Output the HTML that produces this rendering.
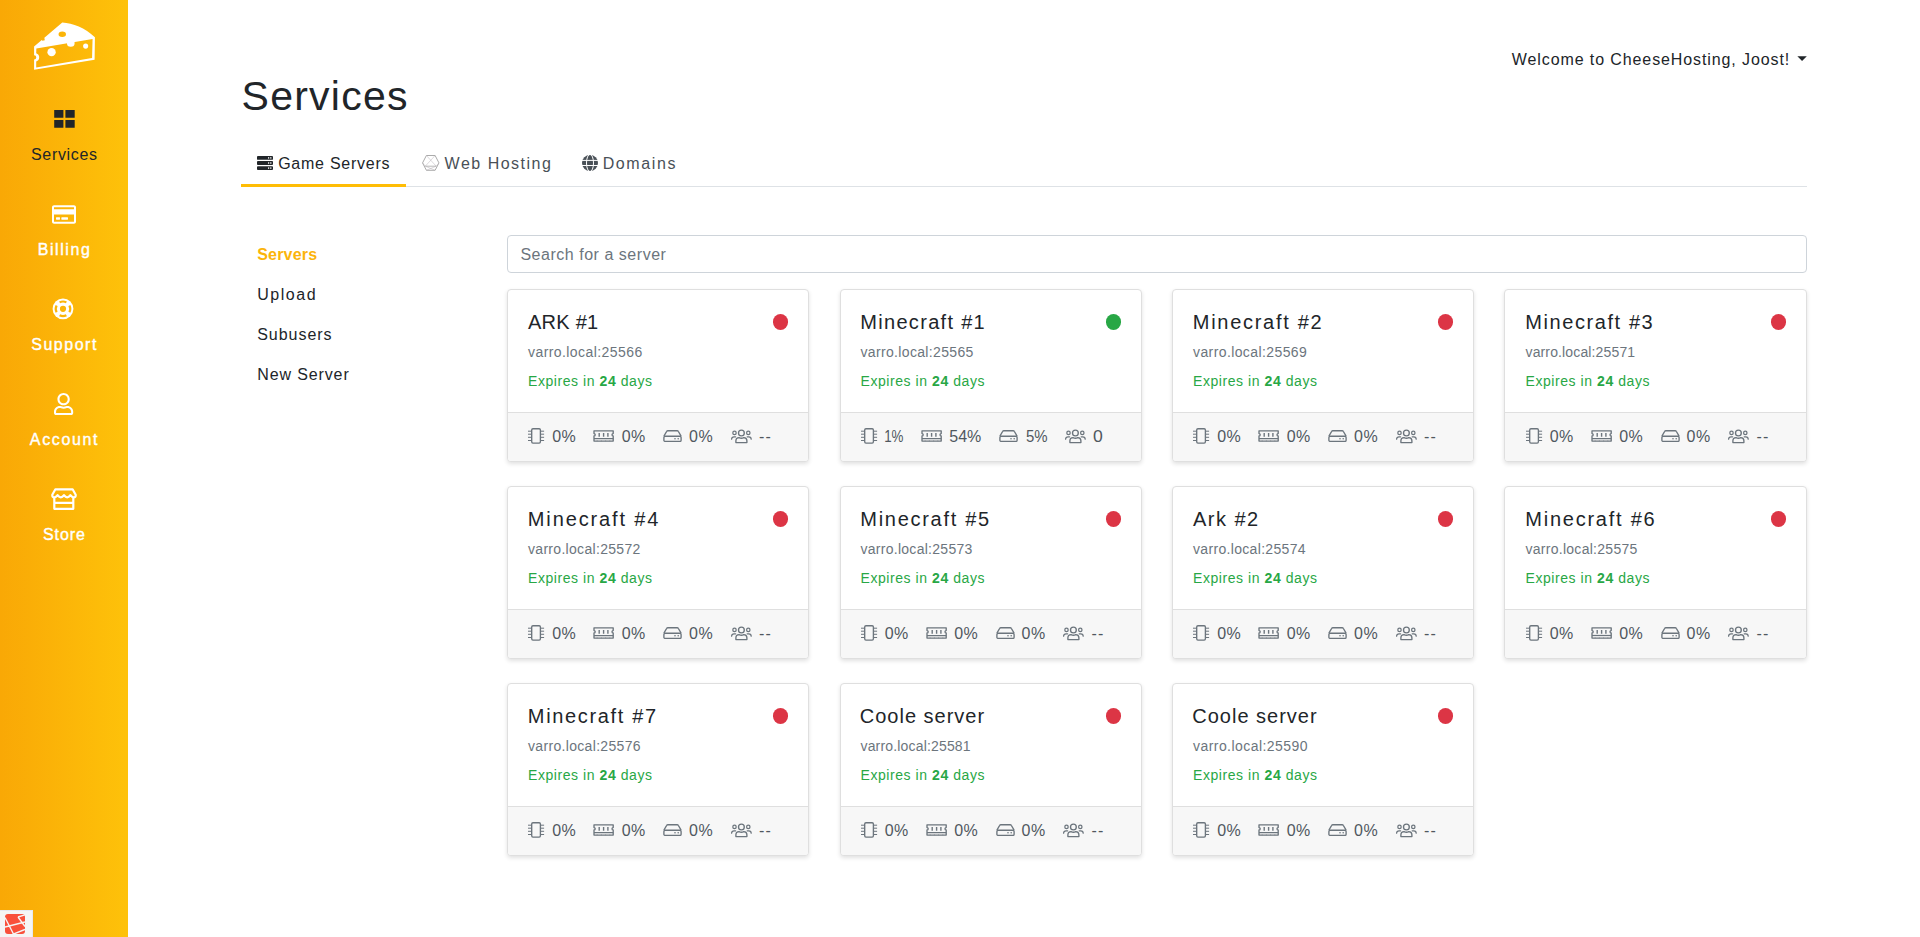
<!DOCTYPE html>
<html lang="en"><head><meta charset="utf-8"><title>Services - CheeseHosting</title>
<style>
*{box-sizing:border-box}
html,body{margin:0;padding:0}
body{width:1920px;height:937px;overflow:hidden;background:#fff;font-family:"Liberation Sans",sans-serif;font-size:16px;color:#212529;position:relative}
.t{position:absolute;display:block;white-space:pre;margin:0;padding:0;font-weight:400;text-decoration:none}
.sidebar{position:absolute;left:0;top:0;width:128px;height:937px;background:linear-gradient(90deg,#f9a806 0%,#fec20a 100%)}
.logo{position:absolute}
.sitem{position:absolute;left:0;width:128px}
.sitem svg{display:block}
.dbg{position:absolute;left:0;top:910px;width:33px;height:27px;background:#f5f5f5;box-shadow:inset -1px 1px 0 #e6e8f2}
.dbg svg{position:absolute;left:5px;top:4px}
.caret{position:absolute;left:1797.4px;top:56.2px;width:9.4px;height:4.8px;background:#212529;clip-path:polygon(0 0,100% 0,50% 100%)}
.tabs{position:absolute;left:241px;top:141px;width:1566px;height:46px;border-bottom:1px solid #dee2e6}
.tab{position:absolute;top:0;height:46px}
.tab svg{position:absolute;top:14px}
.tab.active{border-bottom:3px solid #ffbd05}
.search{position:absolute;left:507px;top:235px;width:1300px;height:38px;border:1px solid #ced4da;border-radius:4px}
.card{position:absolute;height:173px;background:#fff;border:1px solid #dfdfdf;border-radius:4px;box-shadow:0 2px 4px rgba(0,0,0,.12);overflow:hidden}
.card svg{position:absolute}
.exp{position:absolute;top:81px;margin:0;font-size:14px;line-height:20px;color:#28a745;white-space:nowrap;letter-spacing:.56px}
.dot{position:absolute;right:19.9px;top:24.2px;width:15.4px;height:15.4px;border-radius:50%}
.dot.r{background:#dc3545}.dot.g{background:#28a745}
.cfoot{position:absolute;left:0;right:0;top:122px;height:49px;background:#f7f7f7;border-top:1px solid #dfdfdf}
.i-chip{width:17px;height:16px}
.i-mem{width:21px;height:12px}
.i-hdd{width:19px;height:12px}
.i-users{width:21px;height:15px}
.wl{-webkit-text-stroke:.4px #fff}

</style></head>
<body>

<div class="sidebar">
<svg class="logo" style="left:28px;top:16px;width:72px;height:60px" viewBox="0 0 1124 937">
<path fill="#fff" fill-rule="evenodd" d="M535,100C700,108 890,185 1045,330L1040,685L95,840L95,680A34,34 0 0 0 95,612L95,478L215,375L225,386L262,378L255,338L265,330Z M130,508L1008,358L1000,655L128,803L128,712A70,70 0 0 0 128,580Z M477,285a58,42 0 1 0 116,0a58,42 0 1 0 -116,0Z"/>
<circle cx="368" cy="565" r="65" fill="#fff"/><circle cx="900" cy="470" r="40" fill="#fff"/><circle cx="668" cy="422" r="60" fill="#fff"/>
</svg>
<div class="sitem active" style="top:110px"><svg width="21" height="18" viewBox="0 0 21 18" style="margin-left:53.6px"><path fill="#212529" d="M.2 1h9.2v7.8H.2zM11.4 1h9.3v7.8h-9.3zM.2 11h9.2v7.8H.2zM11.4 11h9.3v7.8h-9.3z" transform="translate(0,-1)"/></svg></div>
<div class="sitem" style="top:204.900px"><svg width="24" height="19" viewBox="0 32 576 448" style="margin-left:51.500px"><path fill="#fff" d="M527.9 32H48.1C21.5 32 0 53.500 0 80v352c0 26.500 21.500 48 48.100 48h479.800c26.600 0 48.100-21.500 48.100-48V80c0-26.500-21.500-48-48.100-48zM54.100 80h467.800c3.300 0 6 2.700 6 6v42H48.100V86c0-3.300 2.700-6 6-6zm467.800 352H54.100c-3.300 0-6-2.700-6-6V256h479.800v170c0 3.300-2.700 6-6 6zM192 332v40c0 6.600-5.400 12-12 12h-72c-6.600 0-12-5.400-12-12v-40c0-6.600 5.400-12 12-12h72c6.600 0 12 5.400 12 12zm192 0v40c0 6.600-5.400 12-12 12H236c-6.600 0-12-5.400-12-12v-40c0-6.600 5.400-12 12-12h136c6.600 0 12 5.400 12 12z"/></svg></div>
<div class="sitem" style="top:297.900px"><svg width="22" height="22" viewBox="0 0 22 22" style="margin-left:52.100px"><circle cx="11" cy="10.8" r="10.4" fill="#fff"/><circle cx="11" cy="10.800" r="3.100" fill="#fbb509"/><g fill="none" stroke="#fbb509" stroke-width="2.2"><path d="M7.6 4.4A7.3 7.3 0 0 1 14.400 4.400"/><path d="M7.6 17.200A7.300 7.300 0 0 0 14.400 17.200"/><path d="M4.600 7.400A7.300 7.300 0 0 0 4.600 14.200"/><path d="M17.400 7.400A7.300 7.300 0 0 1 17.400 14.200"/></g></svg></div>
<div class="sitem" style="top:393px"><svg width="19.2" height="22" viewBox="0 0 448 512" style="margin-left:54.400px"><path fill="#fff" d="M313.600 304c-28.700 0-42.500 16-89.600 16-47.100 0-60.800-16-89.600-16C60.200 304 0 364.200 0 438.400V464c0 26.500 21.500 48 48 48h352c26.500 0 48-21.500 48-48v-25.600c0-74.200-60.200-134.400-134.400-134.400zM400 464H48v-25.600c0-47.600 38.800-86.400 86.400-86.400 14.600 0 38.300 16 89.600 16 51.700 0 74.900-16 89.600-16 47.600 0 86.400 38.800 86.400 86.400V464zM224 288c79.500 0 144-64.500 144-144S303.500 0 224 0 80 64.500 80 144s64.500 144 144 144zm0-240c52.900 0 96 43.100 96 96s-43.100 96-96 96-96-43.100-96-96 43.100-96 96-96z"/></svg></div>
<div class="sitem" style="top:488px"><svg width="26" height="22" viewBox="0 0 26 22" style="margin-left:51px"><g fill="none" stroke="#fff" stroke-width="2.200" stroke-linejoin="round" stroke-linecap="round"><path d="M4.400 1.300H21.600L24.700 6.800Q25 9.400 22.600 9.400Q21 9.400 19.400 7.200Q17.800 9.400 16.200 9.400Q14.600 9.400 13 7.200Q11.400 9.400 9.800 9.400Q8.200 9.400 6.600 7.200Q5 9.400 3.400 9.400Q1 9.400 1.300 6.800Z"/><path d="M3.300 10.400V20.800H22.300V10.400M3.300 14.900H22.300"/></g></svg></div>
<a class="t" style="left:31.00px;top:142.96px;font-size:16px;line-height:24px;letter-spacing:0.678px;color:#212529">Services</a><a class="t wl" style="left:37.75px;top:237.96px;font-size:16px;line-height:24px;letter-spacing:1.560px;color:#fff">Billing</a><a class="t wl" style="left:31.25px;top:332.96px;font-size:16px;line-height:24px;letter-spacing:1.509px;color:#fff">Support</a><a class="t wl" style="left:29.85px;top:427.96px;font-size:16px;line-height:24px;letter-spacing:1.640px;color:#fff">Account</a><a class="t wl" style="left:42.97px;top:522.96px;font-size:16px;line-height:24px;letter-spacing:0.897px;color:#fff">Store</a>
<div class="dbg"><svg width="20" height="20" viewBox="0 0 20 20"><rect width="20" height="20" rx="3" fill="#f9503b"/><g stroke="#f5f5f5" stroke-width="1.350" fill="none"><path d="M0 3.500L8.500 20M0 13L20 8M13 3L20 .8M13 3L20 12.500M7.500 20.500L20 15.500"/></g></svg></div>
</div>
<a class="t" style="left:1511.80px;top:48.26px;font-size:16px;line-height:24px;letter-spacing:0.898px;color:#212529">Welcome to CheeseHosting, Joost!</a><i class="caret"></i>
<h1 class="t" style="left:241.60px;top:65.39px;font-size:41px;line-height:62px;letter-spacing:1.241px;color:#212529">Services</h1>
<div class="tabs">
<div class="tab active" style="left:0;width:165px"><svg width="16" height="16" viewBox="0 0 16 16" style="left:16px"><g fill="#212529"><rect x="0" y="1" width="16" height="3.800" rx=".9"/><rect x="0" y="6.100" width="16" height="3.800" rx=".9"/><rect x="0" y="11.200" width="16" height="3.800" rx=".9"/></g><g fill="#fff"><rect x="11" y="2.200" width="1.200" height="1.400"/><rect x="13.200" y="2.200" width="1.200" height="1.400"/><rect x="11" y="7.300" width="1.200" height="1.400"/><rect x="13.200" y="7.300" width="1.200" height="1.400"/><rect x="11" y="12.400" width="1.200" height="1.400"/><rect x="13.200" y="12.400" width="1.200" height="1.400"/></g></svg></div>
<div class="tab" style="left:165px;width:160px"><svg width="18" height="16" viewBox="0 0 18 16" style="left:16px;top:14px"><g fill="none" stroke="#a2a2a2"><path stroke-width=".9" d="M.55 7.900 4.400 .5H13.100L16.950 7.900 13.100 15.300H4.400Z"/><path stroke-width=".75" d="M3.300 11.200H14.200"/><path stroke-width=".5" stroke="#b8b2b8" d="M4.400 .5 14.200 11.200M13.100 .5 3.300 11.200M3.300 11.200 13.100 15.300M14.200 11.200 4.400 15.300M.55 7.900 3.300 11.200M16.950 7.900 14.200 11.200"/></g></svg></div>
<div class="tab" style="left:325px;width:130px"><svg width="16" height="16" viewBox="0 0 16 16" style="left:16.100px"><circle cx="8" cy="8" r="8" fill="#495057"/><g fill="none" stroke="#fff" stroke-width="1"><path d="M0 5.400H16M0 10.500H16"/><ellipse cx="8" cy="8" rx="3.500" ry="8.600"/></g></svg></div>
</div>
<a class="t" style="left:278.20px;top:152.26px;font-size:16px;line-height:24px;letter-spacing:0.742px;color:#212529">Game Servers</a><a class="t" style="left:444.60px;top:152.26px;font-size:16px;line-height:24px;letter-spacing:1.499px;color:#495057">Web Hosting</a><a class="t" style="left:602.70px;top:152.26px;font-size:16px;line-height:24px;letter-spacing:1.611px;color:#495057">Domains</a>
<a class="t" style="left:257.20px;top:242.86px;font-size:16px;line-height:24px;letter-spacing:0.197px;color:#fbb40b;font-weight:700">Servers</a><a class="t" style="left:257.20px;top:282.86px;font-size:16px;line-height:24px;letter-spacing:1.559px;color:#212529">Upload</a><a class="t" style="left:257.20px;top:322.86px;font-size:16px;line-height:24px;letter-spacing:0.972px;color:#212529">Subusers</a><a class="t" style="left:257.20px;top:362.86px;font-size:16px;line-height:24px;letter-spacing:0.883px;color:#212529">New Server</a>
<div class="search"></div><span class="t" style="left:520.40px;top:243.26px;font-size:16px;line-height:24px;letter-spacing:0.526px;color:#6c757d">Search for a server</span>
<div class="card" style="left:507px;top:289px;width:302px">
<span class="dot r"></span><h5 class="t" style="left:20.00px;top:17.27px;font-size:20px;line-height:30px;letter-spacing:0.239px">ARK #1</h5><p class="t" style="left:20.00px;top:52.45px;font-size:14px;line-height:21px;letter-spacing:0.424px;color:#6c757d">varro.local:25566</p><p class="exp" style="left:20.0px">Expires in <b>24</b> days</p>
<div class="cfoot"></div><svg class="i-chip" viewBox="0 0 17 16" style="left:20.0px;top:138.0px"><rect x="3.7" y="0.7" width="8.7" height="14.4" rx="1.3" fill="none" stroke="#6c757d" stroke-width="1.35"/><path d="M0 3.2h3.1M0 6.2h3.1M0 9.3h3.1M0 12.5h3.1M13 3.2h3.1M13 6.2h3.1M13 9.3h3.1M13 12.5h3.1" stroke="#6c757d" stroke-width="1" fill="none"/></svg><span class="t" style="left:44.30px;top:134.96px;font-size:16px;line-height:24px;letter-spacing:0.302px;color:#50585f">0%</span><svg class="i-mem" viewBox="0 0 21 12" style="left:85.2px;top:140.2px"><path d="M1 0.8H20.2V3.6a1.2 1.2 0 0 0 0 2.4V11.1H1V6a1.2 1.2 0 0 0 0-2.4Z" fill="none" stroke="#6c757d" stroke-width="1.35" stroke-linejoin="round"/><path d="M1 8.5H20.2" stroke="#6c757d" stroke-width="1.25"/><path d="M6.2 3v3.7M10.6 3v3.7M14.9 3v3.7" stroke="#6c757d" stroke-width="1.4"/><path d="M4.2 10.6v.6M8.4 10.6v.6M12.6 10.6v.6M16.8 10.6v.6" stroke="#6c757d" stroke-width="0.8"/></svg><span class="t" style="left:113.70px;top:134.96px;font-size:16px;line-height:24px;letter-spacing:0.402px;color:#50585f">0%</span><svg class="i-hdd" viewBox="0 0 19 12" style="left:155.0px;top:140.0px"><path d="M0.9 6.2 3.6 1.5Q4 .7 4.9 .7H14.1Q15 .7 15.4 1.5L18.1 6.2" fill="none" stroke="#6c757d" stroke-width="1.35" stroke-linejoin="round"/><rect x="0.9" y="6.2" width="17.2" height="5.2" rx="1.2" fill="none" stroke="#6c757d" stroke-width="1.35"/><circle cx="12" cy="8.8" r=".8" fill="#6c757d"/><circle cx="15.2" cy="8.8" r=".8" fill="#6c757d"/></svg><span class="t" style="left:181.00px;top:134.96px;font-size:16px;line-height:24px;letter-spacing:0.702px;color:#50585f">0%</span><svg class="i-users" viewBox="0 0 21 15" style="left:222.8px;top:138.5px"><circle cx="10.4" cy="4" r="2.9" fill="none" stroke="#6c757d" stroke-width="1.35"/><circle cx="3.5" cy="3.9" r="1.7" fill="none" stroke="#6c757d" stroke-width="1.25"/><circle cx="17.3" cy="3.9" r="1.7" fill="none" stroke="#6c757d" stroke-width="1.25"/><path d="M4.9 13.6V11.8Q4.9 8.6 8 8.6Q9.2 9.2 10.4 9.2Q11.6 9.2 12.8 8.6Q15.9 8.6 15.9 11.8V13.6Z" fill="none" stroke="#6c757d" stroke-width="1.35" stroke-linejoin="round"/><path d="M.6 10.2Q.6 7.8 3 7.8H4.6M20.2 10.2Q20.2 7.8 17.8 7.8H16.2" fill="none" stroke="#6c757d" stroke-width="1.25" stroke-linecap="round"/></svg><span class="t" style="left:251.00px;top:134.96px;font-size:16px;line-height:24px;letter-spacing:1.072px;color:#50585f">--</span>
</div>
<div class="card" style="left:840px;top:289px;width:302px">
<span class="dot g"></span><h5 class="t" style="left:19.30px;top:17.27px;font-size:20px;line-height:30px;letter-spacing:1.307px">Minecraft #1</h5><p class="t" style="left:19.50px;top:52.45px;font-size:14px;line-height:21px;letter-spacing:0.337px;color:#6c757d">varro.local:25565</p><p class="exp" style="left:19.5px">Expires in <b>24</b> days</p>
<div class="cfoot"></div><svg class="i-chip" viewBox="0 0 17 16" style="left:19.5px;top:138.0px"><rect x="3.7" y="0.7" width="8.7" height="14.4" rx="1.3" fill="none" stroke="#6c757d" stroke-width="1.35"/><path d="M0 3.2h3.1M0 6.2h3.1M0 9.3h3.1M0 12.5h3.1M13 3.2h3.1M13 6.2h3.1M13 9.3h3.1M13 12.5h3.1" stroke="#6c757d" stroke-width="1" fill="none"/></svg><span class="t" style="left:42.90px;top:134.96px;font-size:16px;line-height:24px;letter-spacing:0.000px;color:#50585f;transform:scaleX(0.836);transform-origin:1px 0">1%</span><svg class="i-mem" viewBox="0 0 21 12" style="left:79.9px;top:140.2px"><path d="M1 0.8H20.2V3.6a1.2 1.2 0 0 0 0 2.4V11.1H1V6a1.2 1.2 0 0 0 0-2.4Z" fill="none" stroke="#6c757d" stroke-width="1.35" stroke-linejoin="round"/><path d="M1 8.5H20.2" stroke="#6c757d" stroke-width="1.25"/><path d="M6.2 3v3.7M10.6 3v3.7M14.9 3v3.7" stroke="#6c757d" stroke-width="1.4"/><path d="M4.2 10.6v.6M8.4 10.6v.6M12.6 10.6v.6M16.8 10.6v.6" stroke="#6c757d" stroke-width="0.8"/></svg><span class="t" style="left:108.20px;top:134.96px;font-size:16px;line-height:24px;letter-spacing:0.052px;color:#50585f">54%</span><svg class="i-hdd" viewBox="0 0 19 12" style="left:158.2px;top:140.0px"><path d="M0.9 6.2 3.6 1.5Q4 .7 4.9 .7H14.1Q15 .7 15.4 1.5L18.1 6.2" fill="none" stroke="#6c757d" stroke-width="1.35" stroke-linejoin="round"/><rect x="0.9" y="6.2" width="17.2" height="5.2" rx="1.2" fill="none" stroke="#6c757d" stroke-width="1.35"/><circle cx="12" cy="8.8" r=".8" fill="#6c757d"/><circle cx="15.2" cy="8.8" r=".8" fill="#6c757d"/></svg><span class="t" style="left:184.50px;top:134.96px;font-size:16px;line-height:24px;letter-spacing:0.000px;color:#50585f;transform:scaleX(0.935);transform-origin:-0.0px 0">5%</span><svg class="i-users" viewBox="0 0 21 15" style="left:224.2px;top:138.5px"><circle cx="10.4" cy="4" r="2.9" fill="none" stroke="#6c757d" stroke-width="1.35"/><circle cx="3.5" cy="3.9" r="1.7" fill="none" stroke="#6c757d" stroke-width="1.25"/><circle cx="17.3" cy="3.9" r="1.7" fill="none" stroke="#6c757d" stroke-width="1.25"/><path d="M4.9 13.6V11.8Q4.9 8.6 8 8.6Q9.2 9.2 10.4 9.2Q11.6 9.2 12.8 8.6Q15.9 8.6 15.9 11.8V13.6Z" fill="none" stroke="#6c757d" stroke-width="1.35" stroke-linejoin="round"/><path d="M.6 10.2Q.6 7.8 3 7.8H4.6M20.2 10.2Q20.2 7.8 17.8 7.8H16.2" fill="none" stroke="#6c757d" stroke-width="1.25" stroke-linecap="round"/></svg><span class="t" style="left:252.30px;top:134.96px;font-size:16px;line-height:24px;letter-spacing:0.000px;color:#50585f;transform:scaleX(1.100);transform-origin:-0.0px 0">0</span>
</div>
<div class="card" style="left:1172px;top:289px;width:302px">
<span class="dot r"></span><h5 class="t" style="left:19.80px;top:17.27px;font-size:20px;line-height:30px;letter-spacing:1.707px">Minecraft #2</h5><p class="t" style="left:20.00px;top:52.45px;font-size:14px;line-height:21px;letter-spacing:0.399px;color:#6c757d">varro.local:25569</p><p class="exp" style="left:20.0px">Expires in <b>24</b> days</p>
<div class="cfoot"></div><svg class="i-chip" viewBox="0 0 17 16" style="left:20.0px;top:138.0px"><rect x="3.7" y="0.7" width="8.7" height="14.4" rx="1.3" fill="none" stroke="#6c757d" stroke-width="1.35"/><path d="M0 3.2h3.1M0 6.2h3.1M0 9.3h3.1M0 12.5h3.1M13 3.2h3.1M13 6.2h3.1M13 9.3h3.1M13 12.5h3.1" stroke="#6c757d" stroke-width="1" fill="none"/></svg><span class="t" style="left:44.30px;top:134.96px;font-size:16px;line-height:24px;letter-spacing:0.302px;color:#50585f">0%</span><svg class="i-mem" viewBox="0 0 21 12" style="left:85.2px;top:140.2px"><path d="M1 0.8H20.2V3.6a1.2 1.2 0 0 0 0 2.4V11.1H1V6a1.2 1.2 0 0 0 0-2.4Z" fill="none" stroke="#6c757d" stroke-width="1.35" stroke-linejoin="round"/><path d="M1 8.5H20.2" stroke="#6c757d" stroke-width="1.25"/><path d="M6.2 3v3.7M10.6 3v3.7M14.9 3v3.7" stroke="#6c757d" stroke-width="1.4"/><path d="M4.2 10.6v.6M8.4 10.6v.6M12.6 10.6v.6M16.8 10.6v.6" stroke="#6c757d" stroke-width="0.8"/></svg><span class="t" style="left:113.70px;top:134.96px;font-size:16px;line-height:24px;letter-spacing:0.402px;color:#50585f">0%</span><svg class="i-hdd" viewBox="0 0 19 12" style="left:155.0px;top:140.0px"><path d="M0.9 6.2 3.6 1.5Q4 .7 4.9 .7H14.1Q15 .7 15.4 1.5L18.1 6.2" fill="none" stroke="#6c757d" stroke-width="1.35" stroke-linejoin="round"/><rect x="0.9" y="6.2" width="17.2" height="5.2" rx="1.2" fill="none" stroke="#6c757d" stroke-width="1.35"/><circle cx="12" cy="8.8" r=".8" fill="#6c757d"/><circle cx="15.2" cy="8.8" r=".8" fill="#6c757d"/></svg><span class="t" style="left:181.00px;top:134.96px;font-size:16px;line-height:24px;letter-spacing:0.702px;color:#50585f">0%</span><svg class="i-users" viewBox="0 0 21 15" style="left:222.8px;top:138.5px"><circle cx="10.4" cy="4" r="2.9" fill="none" stroke="#6c757d" stroke-width="1.35"/><circle cx="3.5" cy="3.9" r="1.7" fill="none" stroke="#6c757d" stroke-width="1.25"/><circle cx="17.3" cy="3.9" r="1.7" fill="none" stroke="#6c757d" stroke-width="1.25"/><path d="M4.9 13.6V11.8Q4.9 8.6 8 8.6Q9.2 9.2 10.4 9.2Q11.6 9.2 12.8 8.6Q15.9 8.6 15.9 11.8V13.6Z" fill="none" stroke="#6c757d" stroke-width="1.35" stroke-linejoin="round"/><path d="M.6 10.2Q.6 7.8 3 7.8H4.6M20.2 10.2Q20.2 7.8 17.8 7.8H16.2" fill="none" stroke="#6c757d" stroke-width="1.25" stroke-linecap="round"/></svg><span class="t" style="left:251.00px;top:134.96px;font-size:16px;line-height:24px;letter-spacing:1.072px;color:#50585f">--</span>
</div>
<div class="card" style="left:1504px;top:289px;width:303px">
<span class="dot r"></span><h5 class="t" style="left:20.30px;top:17.27px;font-size:20px;line-height:30px;letter-spacing:1.579px">Minecraft #3</h5><p class="t" style="left:20.50px;top:52.45px;font-size:14px;line-height:21px;letter-spacing:0.137px;color:#6c757d">varro.local:25571</p><p class="exp" style="left:20.5px">Expires in <b>24</b> days</p>
<div class="cfoot"></div><svg class="i-chip" viewBox="0 0 17 16" style="left:20.5px;top:138.0px"><rect x="3.7" y="0.7" width="8.7" height="14.4" rx="1.3" fill="none" stroke="#6c757d" stroke-width="1.35"/><path d="M0 3.2h3.1M0 6.2h3.1M0 9.3h3.1M0 12.5h3.1M13 3.2h3.1M13 6.2h3.1M13 9.3h3.1M13 12.5h3.1" stroke="#6c757d" stroke-width="1" fill="none"/></svg><span class="t" style="left:44.80px;top:134.96px;font-size:16px;line-height:24px;letter-spacing:0.302px;color:#50585f">0%</span><svg class="i-mem" viewBox="0 0 21 12" style="left:85.7px;top:140.2px"><path d="M1 0.8H20.2V3.6a1.2 1.2 0 0 0 0 2.4V11.1H1V6a1.2 1.2 0 0 0 0-2.4Z" fill="none" stroke="#6c757d" stroke-width="1.35" stroke-linejoin="round"/><path d="M1 8.5H20.2" stroke="#6c757d" stroke-width="1.25"/><path d="M6.2 3v3.7M10.6 3v3.7M14.9 3v3.7" stroke="#6c757d" stroke-width="1.4"/><path d="M4.2 10.6v.6M8.4 10.6v.6M12.6 10.6v.6M16.8 10.6v.6" stroke="#6c757d" stroke-width="0.8"/></svg><span class="t" style="left:114.20px;top:134.96px;font-size:16px;line-height:24px;letter-spacing:0.402px;color:#50585f">0%</span><svg class="i-hdd" viewBox="0 0 19 12" style="left:155.5px;top:140.0px"><path d="M0.9 6.2 3.6 1.5Q4 .7 4.9 .7H14.1Q15 .7 15.4 1.5L18.1 6.2" fill="none" stroke="#6c757d" stroke-width="1.35" stroke-linejoin="round"/><rect x="0.9" y="6.2" width="17.2" height="5.2" rx="1.2" fill="none" stroke="#6c757d" stroke-width="1.35"/><circle cx="12" cy="8.8" r=".8" fill="#6c757d"/><circle cx="15.2" cy="8.8" r=".8" fill="#6c757d"/></svg><span class="t" style="left:181.50px;top:134.96px;font-size:16px;line-height:24px;letter-spacing:0.702px;color:#50585f">0%</span><svg class="i-users" viewBox="0 0 21 15" style="left:223.3px;top:138.5px"><circle cx="10.4" cy="4" r="2.9" fill="none" stroke="#6c757d" stroke-width="1.35"/><circle cx="3.5" cy="3.9" r="1.7" fill="none" stroke="#6c757d" stroke-width="1.25"/><circle cx="17.3" cy="3.9" r="1.7" fill="none" stroke="#6c757d" stroke-width="1.25"/><path d="M4.9 13.6V11.8Q4.9 8.6 8 8.6Q9.2 9.2 10.4 9.2Q11.6 9.2 12.8 8.6Q15.9 8.6 15.9 11.8V13.6Z" fill="none" stroke="#6c757d" stroke-width="1.35" stroke-linejoin="round"/><path d="M.6 10.2Q.6 7.8 3 7.8H4.6M20.2 10.2Q20.2 7.8 17.8 7.8H16.2" fill="none" stroke="#6c757d" stroke-width="1.25" stroke-linecap="round"/></svg><span class="t" style="left:251.50px;top:134.96px;font-size:16px;line-height:24px;letter-spacing:1.072px;color:#50585f">--</span>
</div>
<div class="card" style="left:507px;top:486px;width:302px">
<span class="dot r"></span><h5 class="t" style="left:19.80px;top:17.27px;font-size:20px;line-height:30px;letter-spacing:1.870px">Minecraft #4</h5><p class="t" style="left:20.00px;top:52.45px;font-size:14px;line-height:21px;letter-spacing:0.305px;color:#6c757d">varro.local:25572</p><p class="exp" style="left:20.0px">Expires in <b>24</b> days</p>
<div class="cfoot"></div><svg class="i-chip" viewBox="0 0 17 16" style="left:20.0px;top:138.0px"><rect x="3.7" y="0.7" width="8.7" height="14.4" rx="1.3" fill="none" stroke="#6c757d" stroke-width="1.35"/><path d="M0 3.2h3.1M0 6.2h3.1M0 9.3h3.1M0 12.5h3.1M13 3.2h3.1M13 6.2h3.1M13 9.3h3.1M13 12.5h3.1" stroke="#6c757d" stroke-width="1" fill="none"/></svg><span class="t" style="left:44.30px;top:134.96px;font-size:16px;line-height:24px;letter-spacing:0.302px;color:#50585f">0%</span><svg class="i-mem" viewBox="0 0 21 12" style="left:85.2px;top:140.2px"><path d="M1 0.8H20.2V3.6a1.2 1.2 0 0 0 0 2.4V11.1H1V6a1.2 1.2 0 0 0 0-2.4Z" fill="none" stroke="#6c757d" stroke-width="1.35" stroke-linejoin="round"/><path d="M1 8.5H20.2" stroke="#6c757d" stroke-width="1.25"/><path d="M6.2 3v3.7M10.6 3v3.7M14.9 3v3.7" stroke="#6c757d" stroke-width="1.4"/><path d="M4.2 10.6v.6M8.4 10.6v.6M12.6 10.6v.6M16.8 10.6v.6" stroke="#6c757d" stroke-width="0.8"/></svg><span class="t" style="left:113.70px;top:134.96px;font-size:16px;line-height:24px;letter-spacing:0.402px;color:#50585f">0%</span><svg class="i-hdd" viewBox="0 0 19 12" style="left:155.0px;top:140.0px"><path d="M0.9 6.2 3.6 1.5Q4 .7 4.9 .7H14.1Q15 .7 15.4 1.5L18.1 6.2" fill="none" stroke="#6c757d" stroke-width="1.35" stroke-linejoin="round"/><rect x="0.9" y="6.2" width="17.2" height="5.2" rx="1.2" fill="none" stroke="#6c757d" stroke-width="1.35"/><circle cx="12" cy="8.8" r=".8" fill="#6c757d"/><circle cx="15.2" cy="8.8" r=".8" fill="#6c757d"/></svg><span class="t" style="left:181.00px;top:134.96px;font-size:16px;line-height:24px;letter-spacing:0.702px;color:#50585f">0%</span><svg class="i-users" viewBox="0 0 21 15" style="left:222.8px;top:138.5px"><circle cx="10.4" cy="4" r="2.9" fill="none" stroke="#6c757d" stroke-width="1.35"/><circle cx="3.5" cy="3.9" r="1.7" fill="none" stroke="#6c757d" stroke-width="1.25"/><circle cx="17.3" cy="3.9" r="1.7" fill="none" stroke="#6c757d" stroke-width="1.25"/><path d="M4.9 13.6V11.8Q4.9 8.6 8 8.6Q9.2 9.2 10.4 9.2Q11.6 9.2 12.8 8.6Q15.9 8.6 15.9 11.8V13.6Z" fill="none" stroke="#6c757d" stroke-width="1.35" stroke-linejoin="round"/><path d="M.6 10.2Q.6 7.8 3 7.8H4.6M20.2 10.2Q20.2 7.8 17.8 7.8H16.2" fill="none" stroke="#6c757d" stroke-width="1.25" stroke-linecap="round"/></svg><span class="t" style="left:251.00px;top:134.96px;font-size:16px;line-height:24px;letter-spacing:1.072px;color:#50585f">--</span>
</div>
<div class="card" style="left:840px;top:486px;width:302px">
<span class="dot r"></span><h5 class="t" style="left:19.30px;top:17.27px;font-size:20px;line-height:30px;letter-spacing:1.707px">Minecraft #5</h5><p class="t" style="left:19.50px;top:52.45px;font-size:14px;line-height:21px;letter-spacing:0.274px;color:#6c757d">varro.local:25573</p><p class="exp" style="left:19.5px">Expires in <b>24</b> days</p>
<div class="cfoot"></div><svg class="i-chip" viewBox="0 0 17 16" style="left:19.5px;top:138.0px"><rect x="3.7" y="0.7" width="8.7" height="14.4" rx="1.3" fill="none" stroke="#6c757d" stroke-width="1.35"/><path d="M0 3.2h3.1M0 6.2h3.1M0 9.3h3.1M0 12.5h3.1M13 3.2h3.1M13 6.2h3.1M13 9.3h3.1M13 12.5h3.1" stroke="#6c757d" stroke-width="1" fill="none"/></svg><span class="t" style="left:43.80px;top:134.96px;font-size:16px;line-height:24px;letter-spacing:0.302px;color:#50585f">0%</span><svg class="i-mem" viewBox="0 0 21 12" style="left:84.7px;top:140.2px"><path d="M1 0.8H20.2V3.6a1.2 1.2 0 0 0 0 2.4V11.1H1V6a1.2 1.2 0 0 0 0-2.4Z" fill="none" stroke="#6c757d" stroke-width="1.35" stroke-linejoin="round"/><path d="M1 8.5H20.2" stroke="#6c757d" stroke-width="1.25"/><path d="M6.2 3v3.7M10.6 3v3.7M14.9 3v3.7" stroke="#6c757d" stroke-width="1.4"/><path d="M4.2 10.6v.6M8.4 10.6v.6M12.6 10.6v.6M16.8 10.6v.6" stroke="#6c757d" stroke-width="0.8"/></svg><span class="t" style="left:113.20px;top:134.96px;font-size:16px;line-height:24px;letter-spacing:0.402px;color:#50585f">0%</span><svg class="i-hdd" viewBox="0 0 19 12" style="left:154.5px;top:140.0px"><path d="M0.9 6.2 3.6 1.5Q4 .7 4.9 .7H14.1Q15 .7 15.4 1.5L18.1 6.2" fill="none" stroke="#6c757d" stroke-width="1.35" stroke-linejoin="round"/><rect x="0.9" y="6.2" width="17.2" height="5.2" rx="1.2" fill="none" stroke="#6c757d" stroke-width="1.35"/><circle cx="12" cy="8.8" r=".8" fill="#6c757d"/><circle cx="15.2" cy="8.8" r=".8" fill="#6c757d"/></svg><span class="t" style="left:180.50px;top:134.96px;font-size:16px;line-height:24px;letter-spacing:0.702px;color:#50585f">0%</span><svg class="i-users" viewBox="0 0 21 15" style="left:222.3px;top:138.5px"><circle cx="10.4" cy="4" r="2.9" fill="none" stroke="#6c757d" stroke-width="1.35"/><circle cx="3.5" cy="3.9" r="1.7" fill="none" stroke="#6c757d" stroke-width="1.25"/><circle cx="17.3" cy="3.9" r="1.7" fill="none" stroke="#6c757d" stroke-width="1.25"/><path d="M4.9 13.6V11.8Q4.9 8.6 8 8.6Q9.2 9.2 10.4 9.2Q11.6 9.2 12.8 8.6Q15.9 8.6 15.9 11.8V13.6Z" fill="none" stroke="#6c757d" stroke-width="1.35" stroke-linejoin="round"/><path d="M.6 10.2Q.6 7.8 3 7.8H4.6M20.2 10.2Q20.2 7.8 17.8 7.8H16.2" fill="none" stroke="#6c757d" stroke-width="1.25" stroke-linecap="round"/></svg><span class="t" style="left:250.50px;top:134.96px;font-size:16px;line-height:24px;letter-spacing:1.072px;color:#50585f">--</span>
</div>
<div class="card" style="left:1172px;top:486px;width:302px">
<span class="dot r"></span><h5 class="t" style="left:20.00px;top:17.27px;font-size:20px;line-height:30px;letter-spacing:1.464px">Ark #2</h5><p class="t" style="left:20.00px;top:52.45px;font-size:14px;line-height:21px;letter-spacing:0.324px;color:#6c757d">varro.local:25574</p><p class="exp" style="left:20.0px">Expires in <b>24</b> days</p>
<div class="cfoot"></div><svg class="i-chip" viewBox="0 0 17 16" style="left:20.0px;top:138.0px"><rect x="3.7" y="0.7" width="8.7" height="14.4" rx="1.3" fill="none" stroke="#6c757d" stroke-width="1.35"/><path d="M0 3.2h3.1M0 6.2h3.1M0 9.3h3.1M0 12.5h3.1M13 3.2h3.1M13 6.2h3.1M13 9.3h3.1M13 12.5h3.1" stroke="#6c757d" stroke-width="1" fill="none"/></svg><span class="t" style="left:44.30px;top:134.96px;font-size:16px;line-height:24px;letter-spacing:0.302px;color:#50585f">0%</span><svg class="i-mem" viewBox="0 0 21 12" style="left:85.2px;top:140.2px"><path d="M1 0.8H20.2V3.6a1.2 1.2 0 0 0 0 2.4V11.1H1V6a1.2 1.2 0 0 0 0-2.4Z" fill="none" stroke="#6c757d" stroke-width="1.35" stroke-linejoin="round"/><path d="M1 8.5H20.2" stroke="#6c757d" stroke-width="1.25"/><path d="M6.2 3v3.7M10.6 3v3.7M14.9 3v3.7" stroke="#6c757d" stroke-width="1.4"/><path d="M4.2 10.6v.6M8.4 10.6v.6M12.6 10.6v.6M16.8 10.6v.6" stroke="#6c757d" stroke-width="0.8"/></svg><span class="t" style="left:113.70px;top:134.96px;font-size:16px;line-height:24px;letter-spacing:0.402px;color:#50585f">0%</span><svg class="i-hdd" viewBox="0 0 19 12" style="left:155.0px;top:140.0px"><path d="M0.9 6.2 3.6 1.5Q4 .7 4.9 .7H14.1Q15 .7 15.4 1.5L18.1 6.2" fill="none" stroke="#6c757d" stroke-width="1.35" stroke-linejoin="round"/><rect x="0.9" y="6.2" width="17.2" height="5.2" rx="1.2" fill="none" stroke="#6c757d" stroke-width="1.35"/><circle cx="12" cy="8.8" r=".8" fill="#6c757d"/><circle cx="15.2" cy="8.8" r=".8" fill="#6c757d"/></svg><span class="t" style="left:181.00px;top:134.96px;font-size:16px;line-height:24px;letter-spacing:0.702px;color:#50585f">0%</span><svg class="i-users" viewBox="0 0 21 15" style="left:222.8px;top:138.5px"><circle cx="10.4" cy="4" r="2.9" fill="none" stroke="#6c757d" stroke-width="1.35"/><circle cx="3.5" cy="3.9" r="1.7" fill="none" stroke="#6c757d" stroke-width="1.25"/><circle cx="17.3" cy="3.9" r="1.7" fill="none" stroke="#6c757d" stroke-width="1.25"/><path d="M4.9 13.6V11.8Q4.9 8.6 8 8.6Q9.2 9.2 10.4 9.2Q11.6 9.2 12.8 8.6Q15.9 8.6 15.9 11.8V13.6Z" fill="none" stroke="#6c757d" stroke-width="1.35" stroke-linejoin="round"/><path d="M.6 10.2Q.6 7.8 3 7.8H4.6M20.2 10.2Q20.2 7.8 17.8 7.8H16.2" fill="none" stroke="#6c757d" stroke-width="1.25" stroke-linecap="round"/></svg><span class="t" style="left:251.00px;top:134.96px;font-size:16px;line-height:24px;letter-spacing:1.072px;color:#50585f">--</span>
</div>
<div class="card" style="left:1504px;top:486px;width:303px">
<span class="dot r"></span><h5 class="t" style="left:20.30px;top:17.27px;font-size:20px;line-height:30px;letter-spacing:1.761px">Minecraft #6</h5><p class="t" style="left:20.50px;top:52.45px;font-size:14px;line-height:21px;letter-spacing:0.274px;color:#6c757d">varro.local:25575</p><p class="exp" style="left:20.5px">Expires in <b>24</b> days</p>
<div class="cfoot"></div><svg class="i-chip" viewBox="0 0 17 16" style="left:20.5px;top:138.0px"><rect x="3.7" y="0.7" width="8.7" height="14.4" rx="1.3" fill="none" stroke="#6c757d" stroke-width="1.35"/><path d="M0 3.2h3.1M0 6.2h3.1M0 9.3h3.1M0 12.5h3.1M13 3.2h3.1M13 6.2h3.1M13 9.3h3.1M13 12.5h3.1" stroke="#6c757d" stroke-width="1" fill="none"/></svg><span class="t" style="left:44.80px;top:134.96px;font-size:16px;line-height:24px;letter-spacing:0.302px;color:#50585f">0%</span><svg class="i-mem" viewBox="0 0 21 12" style="left:85.7px;top:140.2px"><path d="M1 0.8H20.2V3.6a1.2 1.2 0 0 0 0 2.4V11.1H1V6a1.2 1.2 0 0 0 0-2.4Z" fill="none" stroke="#6c757d" stroke-width="1.35" stroke-linejoin="round"/><path d="M1 8.5H20.2" stroke="#6c757d" stroke-width="1.25"/><path d="M6.2 3v3.7M10.6 3v3.7M14.9 3v3.7" stroke="#6c757d" stroke-width="1.4"/><path d="M4.2 10.6v.6M8.4 10.6v.6M12.6 10.6v.6M16.8 10.6v.6" stroke="#6c757d" stroke-width="0.8"/></svg><span class="t" style="left:114.20px;top:134.96px;font-size:16px;line-height:24px;letter-spacing:0.402px;color:#50585f">0%</span><svg class="i-hdd" viewBox="0 0 19 12" style="left:155.5px;top:140.0px"><path d="M0.9 6.2 3.6 1.5Q4 .7 4.9 .7H14.1Q15 .7 15.4 1.5L18.1 6.2" fill="none" stroke="#6c757d" stroke-width="1.35" stroke-linejoin="round"/><rect x="0.9" y="6.2" width="17.2" height="5.2" rx="1.2" fill="none" stroke="#6c757d" stroke-width="1.35"/><circle cx="12" cy="8.8" r=".8" fill="#6c757d"/><circle cx="15.2" cy="8.8" r=".8" fill="#6c757d"/></svg><span class="t" style="left:181.50px;top:134.96px;font-size:16px;line-height:24px;letter-spacing:0.702px;color:#50585f">0%</span><svg class="i-users" viewBox="0 0 21 15" style="left:223.3px;top:138.5px"><circle cx="10.4" cy="4" r="2.9" fill="none" stroke="#6c757d" stroke-width="1.35"/><circle cx="3.5" cy="3.9" r="1.7" fill="none" stroke="#6c757d" stroke-width="1.25"/><circle cx="17.3" cy="3.9" r="1.7" fill="none" stroke="#6c757d" stroke-width="1.25"/><path d="M4.9 13.6V11.8Q4.9 8.6 8 8.6Q9.2 9.2 10.4 9.2Q11.6 9.2 12.8 8.6Q15.9 8.6 15.9 11.8V13.6Z" fill="none" stroke="#6c757d" stroke-width="1.35" stroke-linejoin="round"/><path d="M.6 10.2Q.6 7.8 3 7.8H4.6M20.2 10.2Q20.2 7.8 17.8 7.8H16.2" fill="none" stroke="#6c757d" stroke-width="1.25" stroke-linecap="round"/></svg><span class="t" style="left:251.50px;top:134.96px;font-size:16px;line-height:24px;letter-spacing:1.072px;color:#50585f">--</span>
</div>
<div class="card" style="left:507px;top:683px;width:302px">
<span class="dot r"></span><h5 class="t" style="left:19.80px;top:17.27px;font-size:20px;line-height:30px;letter-spacing:1.670px">Minecraft #7</h5><p class="t" style="left:20.00px;top:52.45px;font-size:14px;line-height:21px;letter-spacing:0.324px;color:#6c757d">varro.local:25576</p><p class="exp" style="left:20.0px">Expires in <b>24</b> days</p>
<div class="cfoot"></div><svg class="i-chip" viewBox="0 0 17 16" style="left:20.0px;top:138.0px"><rect x="3.7" y="0.7" width="8.7" height="14.4" rx="1.3" fill="none" stroke="#6c757d" stroke-width="1.35"/><path d="M0 3.2h3.1M0 6.2h3.1M0 9.3h3.1M0 12.5h3.1M13 3.2h3.1M13 6.2h3.1M13 9.3h3.1M13 12.5h3.1" stroke="#6c757d" stroke-width="1" fill="none"/></svg><span class="t" style="left:44.30px;top:134.96px;font-size:16px;line-height:24px;letter-spacing:0.302px;color:#50585f">0%</span><svg class="i-mem" viewBox="0 0 21 12" style="left:85.2px;top:140.2px"><path d="M1 0.8H20.2V3.6a1.2 1.2 0 0 0 0 2.4V11.1H1V6a1.2 1.2 0 0 0 0-2.4Z" fill="none" stroke="#6c757d" stroke-width="1.35" stroke-linejoin="round"/><path d="M1 8.5H20.2" stroke="#6c757d" stroke-width="1.25"/><path d="M6.2 3v3.7M10.6 3v3.7M14.9 3v3.7" stroke="#6c757d" stroke-width="1.4"/><path d="M4.2 10.6v.6M8.4 10.6v.6M12.6 10.6v.6M16.8 10.6v.6" stroke="#6c757d" stroke-width="0.8"/></svg><span class="t" style="left:113.70px;top:134.96px;font-size:16px;line-height:24px;letter-spacing:0.402px;color:#50585f">0%</span><svg class="i-hdd" viewBox="0 0 19 12" style="left:155.0px;top:140.0px"><path d="M0.9 6.2 3.6 1.5Q4 .7 4.9 .7H14.1Q15 .7 15.4 1.5L18.1 6.2" fill="none" stroke="#6c757d" stroke-width="1.35" stroke-linejoin="round"/><rect x="0.9" y="6.2" width="17.2" height="5.2" rx="1.2" fill="none" stroke="#6c757d" stroke-width="1.35"/><circle cx="12" cy="8.8" r=".8" fill="#6c757d"/><circle cx="15.2" cy="8.8" r=".8" fill="#6c757d"/></svg><span class="t" style="left:181.00px;top:134.96px;font-size:16px;line-height:24px;letter-spacing:0.702px;color:#50585f">0%</span><svg class="i-users" viewBox="0 0 21 15" style="left:222.8px;top:138.5px"><circle cx="10.4" cy="4" r="2.9" fill="none" stroke="#6c757d" stroke-width="1.35"/><circle cx="3.5" cy="3.9" r="1.7" fill="none" stroke="#6c757d" stroke-width="1.25"/><circle cx="17.3" cy="3.9" r="1.7" fill="none" stroke="#6c757d" stroke-width="1.25"/><path d="M4.9 13.6V11.8Q4.9 8.6 8 8.6Q9.2 9.2 10.4 9.2Q11.6 9.2 12.8 8.6Q15.9 8.6 15.9 11.8V13.6Z" fill="none" stroke="#6c757d" stroke-width="1.35" stroke-linejoin="round"/><path d="M.6 10.2Q.6 7.8 3 7.8H4.6M20.2 10.2Q20.2 7.8 17.8 7.8H16.2" fill="none" stroke="#6c757d" stroke-width="1.25" stroke-linecap="round"/></svg><span class="t" style="left:251.00px;top:134.96px;font-size:16px;line-height:24px;letter-spacing:1.072px;color:#50585f">--</span>
</div>
<div class="card" style="left:840px;top:683px;width:302px">
<span class="dot r"></span><h5 class="t" style="left:18.80px;top:17.27px;font-size:20px;line-height:30px;letter-spacing:0.998px">Coole server</h5><p class="t" style="left:19.50px;top:52.45px;font-size:14px;line-height:21px;letter-spacing:0.168px;color:#6c757d">varro.local:25581</p><p class="exp" style="left:19.5px">Expires in <b>24</b> days</p>
<div class="cfoot"></div><svg class="i-chip" viewBox="0 0 17 16" style="left:19.5px;top:138.0px"><rect x="3.7" y="0.7" width="8.7" height="14.4" rx="1.3" fill="none" stroke="#6c757d" stroke-width="1.35"/><path d="M0 3.2h3.1M0 6.2h3.1M0 9.3h3.1M0 12.5h3.1M13 3.2h3.1M13 6.2h3.1M13 9.3h3.1M13 12.5h3.1" stroke="#6c757d" stroke-width="1" fill="none"/></svg><span class="t" style="left:43.80px;top:134.96px;font-size:16px;line-height:24px;letter-spacing:0.302px;color:#50585f">0%</span><svg class="i-mem" viewBox="0 0 21 12" style="left:84.7px;top:140.2px"><path d="M1 0.8H20.2V3.6a1.2 1.2 0 0 0 0 2.4V11.1H1V6a1.2 1.2 0 0 0 0-2.4Z" fill="none" stroke="#6c757d" stroke-width="1.35" stroke-linejoin="round"/><path d="M1 8.5H20.2" stroke="#6c757d" stroke-width="1.25"/><path d="M6.2 3v3.7M10.6 3v3.7M14.9 3v3.7" stroke="#6c757d" stroke-width="1.4"/><path d="M4.2 10.6v.6M8.4 10.6v.6M12.6 10.6v.6M16.8 10.6v.6" stroke="#6c757d" stroke-width="0.8"/></svg><span class="t" style="left:113.20px;top:134.96px;font-size:16px;line-height:24px;letter-spacing:0.402px;color:#50585f">0%</span><svg class="i-hdd" viewBox="0 0 19 12" style="left:154.5px;top:140.0px"><path d="M0.9 6.2 3.6 1.5Q4 .7 4.9 .7H14.1Q15 .7 15.4 1.5L18.1 6.2" fill="none" stroke="#6c757d" stroke-width="1.35" stroke-linejoin="round"/><rect x="0.9" y="6.2" width="17.2" height="5.2" rx="1.2" fill="none" stroke="#6c757d" stroke-width="1.35"/><circle cx="12" cy="8.8" r=".8" fill="#6c757d"/><circle cx="15.2" cy="8.8" r=".8" fill="#6c757d"/></svg><span class="t" style="left:180.50px;top:134.96px;font-size:16px;line-height:24px;letter-spacing:0.702px;color:#50585f">0%</span><svg class="i-users" viewBox="0 0 21 15" style="left:222.3px;top:138.5px"><circle cx="10.4" cy="4" r="2.9" fill="none" stroke="#6c757d" stroke-width="1.35"/><circle cx="3.5" cy="3.9" r="1.7" fill="none" stroke="#6c757d" stroke-width="1.25"/><circle cx="17.3" cy="3.9" r="1.7" fill="none" stroke="#6c757d" stroke-width="1.25"/><path d="M4.9 13.6V11.8Q4.9 8.6 8 8.6Q9.2 9.2 10.4 9.2Q11.6 9.2 12.8 8.6Q15.9 8.6 15.9 11.8V13.6Z" fill="none" stroke="#6c757d" stroke-width="1.35" stroke-linejoin="round"/><path d="M.6 10.2Q.6 7.8 3 7.8H4.6M20.2 10.2Q20.2 7.8 17.8 7.8H16.2" fill="none" stroke="#6c757d" stroke-width="1.25" stroke-linecap="round"/></svg><span class="t" style="left:250.50px;top:134.96px;font-size:16px;line-height:24px;letter-spacing:1.072px;color:#50585f">--</span>
</div>
<div class="card" style="left:1172px;top:683px;width:302px">
<span class="dot r"></span><h5 class="t" style="left:19.30px;top:17.27px;font-size:20px;line-height:30px;letter-spacing:0.998px">Coole server</h5><p class="t" style="left:20.00px;top:52.45px;font-size:14px;line-height:21px;letter-spacing:0.443px;color:#6c757d">varro.local:25590</p><p class="exp" style="left:20.0px">Expires in <b>24</b> days</p>
<div class="cfoot"></div><svg class="i-chip" viewBox="0 0 17 16" style="left:20.0px;top:138.0px"><rect x="3.7" y="0.7" width="8.7" height="14.4" rx="1.3" fill="none" stroke="#6c757d" stroke-width="1.35"/><path d="M0 3.2h3.1M0 6.2h3.1M0 9.3h3.1M0 12.5h3.1M13 3.2h3.1M13 6.2h3.1M13 9.3h3.1M13 12.5h3.1" stroke="#6c757d" stroke-width="1" fill="none"/></svg><span class="t" style="left:44.30px;top:134.96px;font-size:16px;line-height:24px;letter-spacing:0.302px;color:#50585f">0%</span><svg class="i-mem" viewBox="0 0 21 12" style="left:85.2px;top:140.2px"><path d="M1 0.8H20.2V3.6a1.2 1.2 0 0 0 0 2.4V11.1H1V6a1.2 1.2 0 0 0 0-2.4Z" fill="none" stroke="#6c757d" stroke-width="1.35" stroke-linejoin="round"/><path d="M1 8.5H20.2" stroke="#6c757d" stroke-width="1.25"/><path d="M6.2 3v3.7M10.6 3v3.7M14.9 3v3.7" stroke="#6c757d" stroke-width="1.4"/><path d="M4.2 10.6v.6M8.4 10.6v.6M12.6 10.6v.6M16.8 10.6v.6" stroke="#6c757d" stroke-width="0.8"/></svg><span class="t" style="left:113.70px;top:134.96px;font-size:16px;line-height:24px;letter-spacing:0.402px;color:#50585f">0%</span><svg class="i-hdd" viewBox="0 0 19 12" style="left:155.0px;top:140.0px"><path d="M0.9 6.2 3.6 1.5Q4 .7 4.9 .7H14.1Q15 .7 15.4 1.5L18.1 6.2" fill="none" stroke="#6c757d" stroke-width="1.35" stroke-linejoin="round"/><rect x="0.9" y="6.2" width="17.2" height="5.2" rx="1.2" fill="none" stroke="#6c757d" stroke-width="1.35"/><circle cx="12" cy="8.8" r=".8" fill="#6c757d"/><circle cx="15.2" cy="8.8" r=".8" fill="#6c757d"/></svg><span class="t" style="left:181.00px;top:134.96px;font-size:16px;line-height:24px;letter-spacing:0.702px;color:#50585f">0%</span><svg class="i-users" viewBox="0 0 21 15" style="left:222.8px;top:138.5px"><circle cx="10.4" cy="4" r="2.9" fill="none" stroke="#6c757d" stroke-width="1.35"/><circle cx="3.5" cy="3.9" r="1.7" fill="none" stroke="#6c757d" stroke-width="1.25"/><circle cx="17.3" cy="3.9" r="1.7" fill="none" stroke="#6c757d" stroke-width="1.25"/><path d="M4.9 13.6V11.8Q4.9 8.6 8 8.6Q9.2 9.2 10.4 9.2Q11.6 9.2 12.8 8.6Q15.9 8.6 15.9 11.8V13.6Z" fill="none" stroke="#6c757d" stroke-width="1.35" stroke-linejoin="round"/><path d="M.6 10.2Q.6 7.8 3 7.8H4.6M20.2 10.2Q20.2 7.8 17.8 7.8H16.2" fill="none" stroke="#6c757d" stroke-width="1.25" stroke-linecap="round"/></svg><span class="t" style="left:251.00px;top:134.96px;font-size:16px;line-height:24px;letter-spacing:1.072px;color:#50585f">--</span>
</div>

</body></html>
